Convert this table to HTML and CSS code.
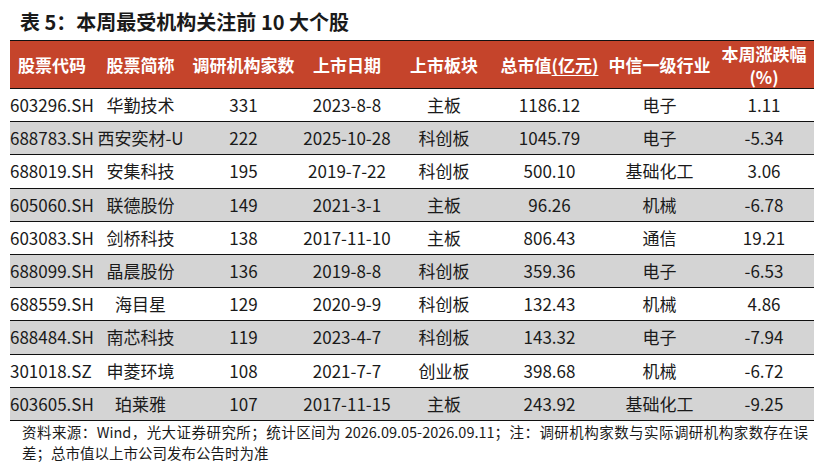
FILE: index.html
```html
<!DOCTYPE html>
<html lang="zh-CN">
<head>
<meta charset="utf-8">
<title>表 5</title>
<link rel="stylesheet" href="styles.css">
</head>
<body>
<div class="page">
  <h1 class="title">表 5：本周最受机构关注前 10 大个股</h1>
  <table class="tbl">
    <colgroup>
      <col class="c1"><col class="c2"><col class="c3"><col class="c4"><col class="c5"><col class="c6"><col class="c7"><col class="c8">
    </colgroup>
    <thead>
      <tr>
        <th>股票代码</th>
        <th>股票简称</th>
        <th>调研机构家数</th>
        <th>上市日期</th>
        <th>上市板块</th>
        <th>总市值<span class="ul">(亿元)</span></th>
        <th>中信一级行业</th>
        <th>本周涨跌幅<br>(%)</th>
      </tr>
    </thead>
    <tbody>
      <tr><td class="code">603296.SH</td><td>华勤技术</td><td>331</td><td>2023-8-8</td><td>主板</td><td>1186.12</td><td>电子</td><td>1.11</td></tr>
      <tr><td class="code">688783.SH</td><td>西安奕材-U</td><td>222</td><td>2025-10-28</td><td>科创板</td><td>1045.79</td><td>电子</td><td>-5.34</td></tr>
      <tr><td class="code">688019.SH</td><td>安集科技</td><td>195</td><td>2019-7-22</td><td>科创板</td><td>500.10</td><td>基础化工</td><td>3.06</td></tr>
      <tr><td class="code">605060.SH</td><td>联德股份</td><td>149</td><td>2021-3-1</td><td>主板</td><td>96.26</td><td>机械</td><td>-6.78</td></tr>
      <tr><td class="code">603083.SH</td><td>剑桥科技</td><td>138</td><td>2017-11-10</td><td>主板</td><td>806.43</td><td>通信</td><td>19.21</td></tr>
      <tr><td class="code">688099.SH</td><td>晶晨股份</td><td>136</td><td>2019-8-8</td><td>科创板</td><td>359.36</td><td>电子</td><td>-6.53</td></tr>
      <tr><td class="code">688559.SH</td><td>海目星</td><td>129</td><td>2020-9-9</td><td>科创板</td><td>132.43</td><td>机械</td><td>4.86</td></tr>
      <tr><td class="code">688484.SH</td><td>南芯科技</td><td>119</td><td>2023-4-7</td><td>科创板</td><td>143.32</td><td>电子</td><td>-7.94</td></tr>
      <tr><td class="code">301018.SZ</td><td>申菱环境</td><td>108</td><td>2021-7-7</td><td>创业板</td><td>398.68</td><td>机械</td><td>-6.72</td></tr>
      <tr><td class="code">603605.SH</td><td>珀莱雅</td><td>107</td><td>2017-11-15</td><td>主板</td><td>243.92</td><td>基础化工</td><td>-9.25</td></tr>
    </tbody>
  </table>
  <div class="note">
    <span class="note-line1">资料来源：Wind，光大证券研究所；统计区间为 2026.09.05-2026.09.11；注：调研机构家数与实际调研机构家数存在误</span>
    <span class="note-line2">差；总市值以上市公司发布公告时为准</span>
  </div>
</div>
</body>
</html>
```

FILE: styles.css
```css
html, body {
  margin: 0;
  padding: 0;
  background: #ffffff;
}

body {
  font-family: "Noto Sans CJK SC", "Noto Sans", sans-serif;
  color: #1a1a1a;
}

.page {
  width: 828px;
  height: 466px;
  overflow: hidden;
}

.title {
  margin: 0;
  padding: 10px 0 0 20px;
  height: 30px;
  box-sizing: border-box;
  font-size: 20px;
  line-height: 24px;
  font-weight: 700;
  color: #1a1a1a;
}

.tbl {
  margin: 10px 0 0 10px;
  width: 804px;
  table-layout: fixed;
  border-collapse: collapse;
  font-size: 17px;
}

.c1 { width: 84px; }
.c2 { width: 93px; }
.c3 { width: 113px; }
.c4 { width: 94px; }
.c5 { width: 100px; }
.c6 { width: 111px; }
.c7 { width: 109px; }
.c8 { width: 100px; }

.tbl th {
  background: #c5442b;
  color: #ffffff;
  font-weight: 700;
  height: 47px;
  line-height: 23px;
  padding: 0;
  text-align: center;
  vertical-align: middle;
  border-top: 1px solid #111;
  border-bottom: 1px solid #111;
  white-space: nowrap;
}

.ul {
  text-decoration: underline;
  text-underline-offset: 3px;
}

.tbl td {
  height: 32.2px;
  padding: 0;
  text-align: center;
  vertical-align: middle;
  line-height: 22px;
  border-bottom: 1px solid #111;
  white-space: nowrap;
}

.tbl td.code {
  text-align: left;
}

.tbl tbody tr:nth-child(even) td {
  background: #d4d4d4;
}

.note {
  padding: 0 20px 0 22px;
  font-size: 14.5px;
  line-height: 21px;
  color: #1a1a1a;
}

.note-line1 {
  display: block;
  text-align: justify;
  text-align-last: justify;
}

.note-line2 {
  display: block;
}
```
